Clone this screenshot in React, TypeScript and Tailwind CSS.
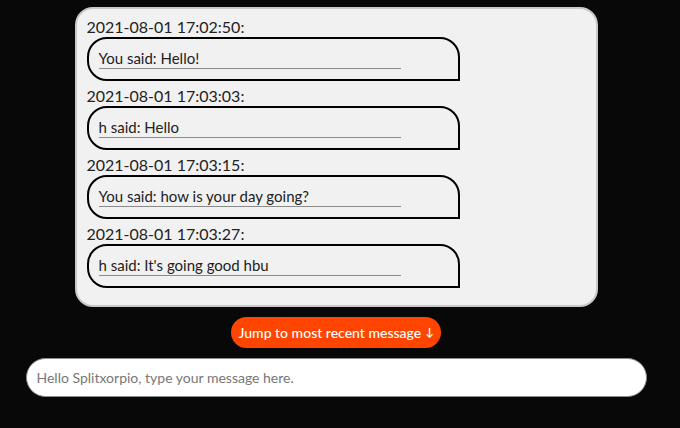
import { useState } from 'react';

const messages = [
    { time: '2021-08-01 17:02:50:', text: 'You said: Hello!' },
    { time: '2021-08-01 17:03:03:', text: 'h said: Hello' },
    { time: '2021-08-01 17:03:15:', text: 'You said: how is your day going?' },
    { time: '2021-08-01 17:03:27:', text: "h said: It's going good hbu" },
];

export default function App() {
    const [draft, setDraft] = useState('');

    return (
        <div className="min-h-screen bg-[#080808] font-['Lato','Noto_Sans',sans-serif]">
            <div className="w-[672px] flex flex-col items-center pt-[7px]">
                {/* Message log */}
                <div className="w-[523px] bg-[#f1f1f1] border-2 border-[#c9c9c9] rounded-[18px] px-[10px] pt-[8px] pb-[12px]">
                    {messages.map((m) => (
                        <div key={m.time} className="mb-[5px]">
                            <p className="text-[16px] leading-[20px] text-[#222]">{m.time}</p>
                            <div className="w-[373px] h-[44px] border-2 border-black rounded-[20px] rounded-br-none px-[10px] pt-[10px]">
                                <p className="w-[302px] text-[15px] leading-[19px] text-[#222] border-b border-[#8a8a8a]">{m.text}</p>
                            </div>
                        </div>
                    ))}
                </div>

                <button className="mt-[10px] h-[31px] px-[8px] rounded-full bg-[#ff4500] text-white text-[14px] font-medium flex items-center gap-[4px]">
                    Jump to most recent message
                    <span className="text-[11px] font-bold">↓</span>
                </button>

                <input
                    value={draft}
                    onChange={(e) => setDraft(e.target.value)}
                    placeholder="Hello Splitxorpio, type your message here."
                    className="mt-[10px] w-[621px] h-[39px] rounded-[20px] bg-white border border-[#8c8c8c] px-[10px] text-[14px] text-[#333] placeholder:text-[#777] outline-none"
                />
            </div>
        </div>
    );
}
